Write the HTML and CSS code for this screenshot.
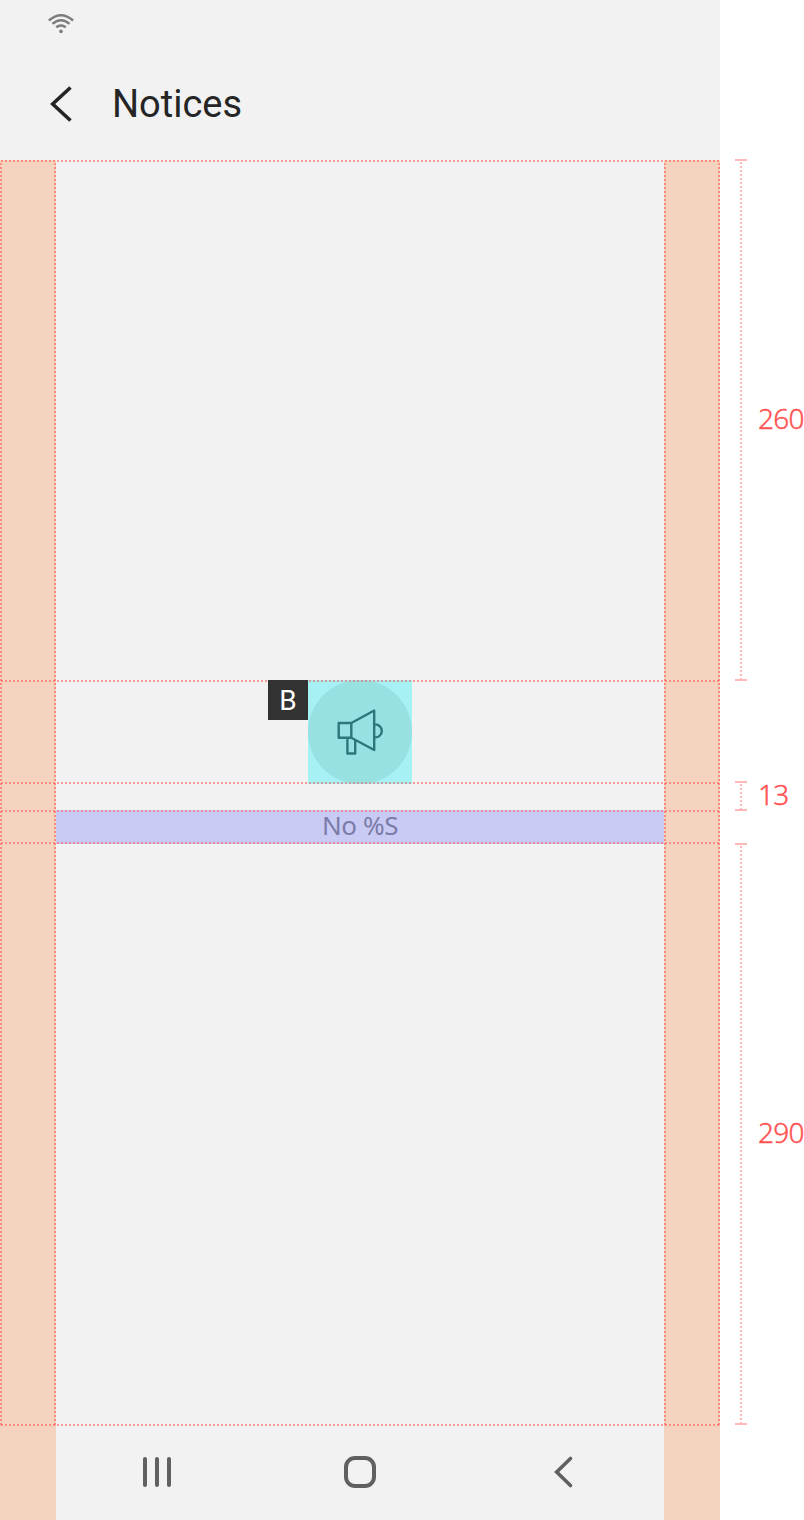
FILE: index.html
```html
<!DOCTYPE html>
<html lang="en">
<head>
<meta charset="utf-8">
<title>Notices</title>
<link rel="stylesheet" href="styles.css">
</head>
<body>
<div class="board">
  <div class="screen">
    <header class="header">
      <svg class="wifi" width="28" height="22" viewBox="0 0 28 22" fill="none" stroke="#7c7c7c" stroke-width="2.5">
        <path d="M1.9 7.5Q14 -3 26.1 7.5M5.5 10.9Q14 3.7 22.5 10.9M9.2 14.3Q14 10.6 18.8 14.3"/>
        <circle cx="14" cy="18.4" r="1.8" fill="#7c7c7c" stroke="none"/>
      </svg>
      <div class="title-row">
        <svg class="back" width="24" height="38" viewBox="0 0 24 38" fill="none" stroke="#252525" stroke-width="3.6"><path d="M21.5 2.5L3.7 19L21.5 35.5"/></svg>
        <h1 class="title">Notices</h1>
      </div>
    </header>
    <div class="body">
      <div class="margin"></div>
      <div class="center">
        <main class="content">
          <div class="icon-box">
            <div class="tag">B</div>
            <div class="circle">
              <svg width="104" height="104" viewBox="0 0 104 104" fill="none" stroke="#2b777a" stroke-width="2.4" stroke-linejoin="round"><path d="M30.7 43H43.3V57.8H30.7ZM43.3 43L66.2 30.5V70L43.3 57.8M66.2 44.4H67.3A6.5 6.5 0 0 1 67.3 57.4H66.2M39.4 58V73.5H47.2V60"/></svg>
            </div>
          </div>
          <div class="message"><span class="message-text">No %S</span></div>
        </main>
        <nav class="nav">
          <svg width="608" height="96" viewBox="0 0 608 96" fill="none" stroke="#606060" stroke-width="4" stroke-linecap="round"><path d="M89 35V61M101 35V61M113 35V61"/><rect x="290" y="34" width="28" height="28" rx="9"/><path d="M514.5 34.5L500.7 48L514.5 61.5" stroke-width="3.6"/></svg>
        </nav>
      </div>
      <div class="margin"></div>
    </div>
    <div class="guides">
      <i class="h top"></i><i class="h icon-top"></i><i class="h icon-end"></i><i class="h text-top"></i><i class="h text-end"></i><i class="h bottom"></i>
      <i class="v left"></i><i class="v inner-left"></i><i class="v inner-right"></i><i class="v right"></i>
    </div>
  </div>
  <aside class="rulers">
    <div class="ruler first"><div class="bar"></div><span class="value">260</span></div>
    <div class="ruler second"><div class="bar"></div><span class="value">13</span></div>
    <div class="ruler third"><div class="bar"></div><span class="value">290</span></div>
  </aside>
</div>
</body>
</html>
```

FILE: styles.css
```css
* { box-sizing: border-box; }
body { margin: 0; background: #fff; overflow: hidden; }
.board { display: flex; width: 804px; height: 1520px; }
.screen { position: relative; width: 720px; background: #f2f2f2; }
.header { height: 160px; padding: 13px 0 0 47px; }
.wifi { display: block; }
.title-row { display: flex; align-items: center; margin-top: 47px; height: 44px; padding-left: 2px; }
.title { margin: 0 0 0 39px; font: 400 38px/44px Roboto, sans-serif; color: #252525; }
.body { display: flex; height: 1360px; }
.margin { width: 56px; background: #f5d4bf; }
.center { width: 608px; background: #f2f2f2; }
.content { height: 1264px; padding-top: 520px; }
.icon-box { position: relative; width: 104px; height: 104px; margin: 0 auto 26px; background: #a6f1f3; }
.circle { width: 104px; height: 104px; border-radius: 50%; background: #98e1e3; }
.circle svg { display: block; }
.tag { position: absolute; z-index: 1; left: -40px; top: 0; width: 40px; height: 40px; background: #323232; color: #fff; font: 400 28px/41px Roboto, sans-serif; text-align: center; }
.message { height: 34px; background: #cacbf5; text-align: center; font: 400 26px/30px "Noto Sans", sans-serif; letter-spacing: -.4px; color: #7b7ca8; }
.message-text { display: inline-block; }
.nav { height: 96px; }
.nav svg { display: block; }
.guides i { position: absolute; display: block; opacity: .55; }
.h { left: 1px; width: 719px; height: 2px; background: repeating-linear-gradient(90deg, #ff5252 0 2px, transparent 2px 4px); }
.v { top: 163px; width: 2px; height: 1262px; background: repeating-linear-gradient(#ff5252 0 2px, transparent 2px 4px); }
.top { top: 160px; }
.icon-top { top: 680px; }
.icon-end { top: 782px; }
.text-top { top: 810px; }
.text-end { top: 842px; }
.bottom { top: 1424px; }
.left { left: 0; }
.inner-left { left: 54px; }
.inner-right { left: 664px; }
.right { left: 718px; }
.rulers { width: 84px; padding: 159px 0 0 15px; }
.ruler { display: flex; align-items: center; }
.first { height: 522px; }
.second { height: 30px; margin-top: 100px; }
.third { height: 582px; margin-top: 32px; }
.bar { flex: none; width: 12px; height: 100%; border: solid #ffb8b8; border-width: 2px 0; background: repeating-linear-gradient(transparent 0 1px, #ffb8b8 1px 3px, transparent 3px 4px) 5px 0 / 2px 100% no-repeat; }
.value { margin: 0 0 5px 11px; font: 300 28px/32px "Noto Sans", sans-serif; letter-spacing: -.7px; -webkit-text-stroke: .4px #ff5252; color: #ff5252; }
```
